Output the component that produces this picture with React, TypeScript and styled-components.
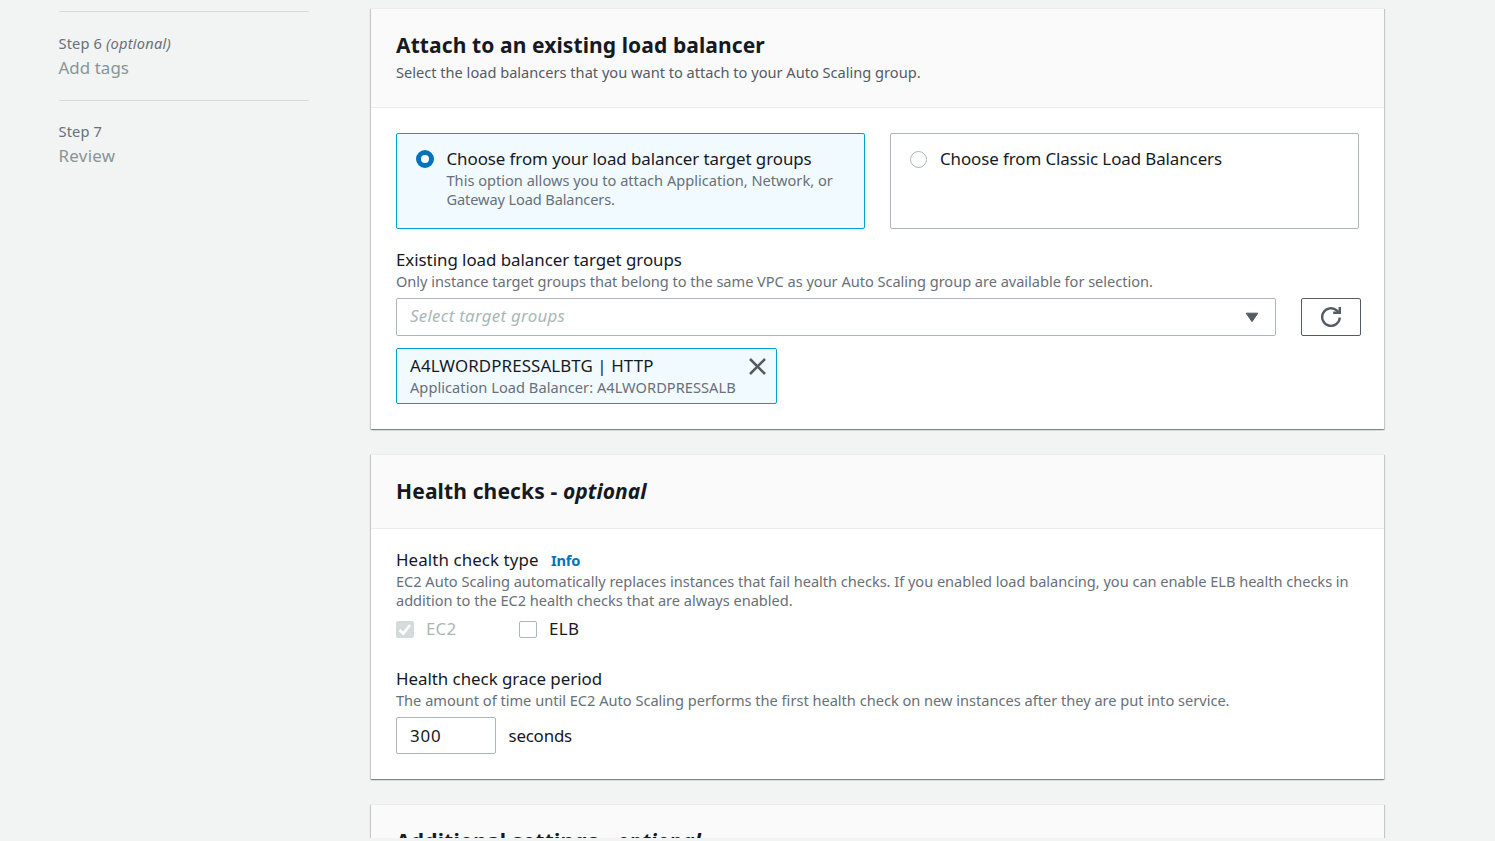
import React from 'react';
import styled, { createGlobalStyle, css } from 'styled-components';

const GlobalStyle = createGlobalStyle`
  *, *::before, *::after { box-sizing: border-box; }
  body {
    margin: 0;
    background: #f2f3f3;
    color: #16191f;
    font-family: 'Noto Sans', 'Open Sans', sans-serif;
    font-size: 16.9px;
    overflow: hidden;
  }
  h2, p { margin: 0; }
`;

type Tracking = { $track?: number };
const tracking = css<Tracking>`
  letter-spacing: ${(p) => p.$track ?? 0}px;
  white-space: nowrap;
`;

const Page = styled.div`
  display: flex;
  gap: 62px;
  height: 838px;
  padding-left: 58.5px;
  overflow: hidden;
`;

const Steps = styled.nav`
  width: 250.5px;
  padding-top: 11px;
`;

const Step = styled.div`
  height: 89px;
  padding-top: 22px;
  border-top: 1px solid #d5dbdb;
  & + & { padding-top: 21px; }
`;

const StepNumber = styled.div<Tracking>`
  ${tracking}
  height: 19px;
  line-height: 19px;
  font-size: 14.6px;
  color: #687078;
`;

const StepOptional = styled.em<Tracking>`
  ${tracking}
`;

const StepName = styled.div<Tracking>`
  ${tracking}
  margin-top: 4px;
  line-height: 22px;
  color: #879596;
`;

const Main = styled.main`
  width: 1013px;
  flex: none;
  display: flex;
  flex-direction: column;
  gap: 25px;
  padding-top: 8px;
`;

const Panel = styled.section`
  flex: none;
  background: #fff;
  border-top: 1px solid #eaeded;
  box-shadow: 0 1px 1px 0 rgba(0, 28, 36, 0.3), 1px 1px 1px 0 rgba(0, 28, 36, 0.15),
    -1px 1px 1px 0 rgba(0, 28, 36, 0.15);
`;

const PanelHeader = styled.header<{ $height: number }>`
  height: ${(p) => p.$height}px;
  padding: 21px 25px 0;
  background: #fafafa;
  border-bottom: 1px solid #eaeded;
`;

const Title = styled.h2<Tracking>`
  ${tracking}
  font-size: 21px;
  line-height: 30px;
  font-weight: 700;
`;

const TitleOptional = styled.em<Tracking>`
  ${tracking}
`;

const TitleNote = styled.p<Tracking>`
  ${tracking}
  margin-top: 3px;
  font-size: 14.6px;
  line-height: 19px;
  color: #545b64;
`;

const PanelBody = styled.div<{ $top: number }>`
  padding: ${(p) => p.$top}px 25px 25px;
`;

const Tiles = styled.div`
  display: grid;
  grid-template-columns: 1fr 1fr;
  gap: 25px;
  margin-bottom: 20px;
`;

const Tile = styled.label<{ $selected?: boolean }>`
  display: flex;
  height: 96px;
  padding: 14px 19px;
  border: 1px solid ${(p) => (p.$selected ? '#00a1c9' : '#aab7b8')};
  border-radius: 2px;
  background: ${(p) => (p.$selected ? '#f1faff' : '#fff')};
`;

const Radio = styled.span<{ $selected?: boolean }>`
  flex: none;
  width: ${(p) => (p.$selected ? 18 : 17)}px;
  height: ${(p) => (p.$selected ? 18 : 17)}px;
  margin: ${(p) => (p.$selected ? '2px 12.5px' : '2.5px 13px')} 0 0;
  border-radius: 50%;
  background: #fff;
  border: ${(p) => (p.$selected ? '5.5px solid #0073bb' : '1px solid #aab7b8')};
`;

const Label = styled.div<Tracking>`
  ${tracking}
  height: 22px;
  line-height: 22px;
`;

const Description = styled.p<Tracking>`
  ${tracking}
  height: 19px;
  font-size: 14.6px;
  line-height: 19px;
  color: #687078;
`;

const FieldNotes = styled.div`
  margin: 1px 0 7px;
`;

const TextStack = styled.div`
  display: flex;
  flex-direction: column;
  ${Label} { margin-bottom: 1px; }
`;

const SelectRow = styled.div`
  display: flex;
  gap: 25px;
`;

const Select = styled.div`
  flex: none;
  width: 880px;
  height: 38px;
  display: flex;
  align-items: center;
  justify-content: space-between;
  padding: 0 16px 3px 13px;
  border: 1px solid #aab7b8;
  border-radius: 2px;
`;

const Placeholder = styled.em<Tracking>`
  ${tracking}
  color: #aab7b8;
`;

const CaretIcon = styled.svg`
  margin-top: 2px;
`;

const RefreshButton = styled.button`
  flex: none;
  width: 60px;
  height: 38px;
  display: grid;
  place-items: center;
  padding: 0;
  background: #fff;
  border: 1px solid #545b64;
  border-radius: 2px;
`;

const Token = styled.div`
  display: flex;
  justify-content: space-between;
  width: 381px;
  height: 56px;
  margin-top: 12px;
  padding: 6px 10px 0 13px;
  border: 1px solid #00a1c9;
  border-radius: 2px;
  background: #f1faff;
`;

const TokenIcon = styled.svg`
  flex: none;
  margin-top: 3px;
`;

const LabelRow = styled.div`
  display: flex;
  height: 22px;
  gap: 12.5px;
`;

const InfoLink = styled.a<Tracking>`
  ${tracking}
  font-size: 14.6px;
  line-height: 22px;
  font-weight: 700;
  color: #0073bb;
`;

const Checks = styled.div`
  display: flex;
  margin: 8px 0 28px;
`;

const Check = styled.label<{ $disabled?: boolean }>`
  display: flex;
  gap: 12px;
  width: 123px;
  color: ${(p) => (p.$disabled ? '#aab7b8' : '#16191f')};
`;

const Box = styled.span<{ $disabled?: boolean }>`
  display: grid;
  place-items: center;
  width: 18px;
  height: 17px;
  margin-top: 3px;
  border: 1px solid ${(p) => (p.$disabled ? '#d5dbdb' : '#aab7b8')};
  border-radius: 2px;
  background: ${(p) => (p.$disabled ? '#d5dbdb' : '#fff')};
`;

const InputRow = styled.div`
  display: flex;
  align-items: center;
  gap: 12.5px;
`;

const NumberInput = styled.input`
  width: 100px;
  height: 37px;
  padding: 0 13px;
  border: 1px solid #aab7b8;
  border-radius: 2px;
  font: inherit;
  color: inherit;
  letter-spacing: 0.8px;
`;

export default function App() {
  return (
    <>
      <GlobalStyle />
      <Page>
        <Steps>
          <Step>
            <StepNumber $track={0.15}>
              Step 6 <StepOptional $track={0.25}>(optional)</StepOptional>
            </StepNumber>
            <StepName $track={0.06}>Add tags</StepName>
          </Step>
          <Step>
            <StepNumber $track={0.15}>Step 7</StepNumber>
            <StepName $track={0.3}>Review</StepName>
          </Step>
        </Steps>
        <Main>
          <Panel>
            <PanelHeader $height={99}>
              <Title $track={0.1}>Attach to an existing load balancer</Title>
              <TitleNote>
                Select the load balancers that you want to attach to your Auto Scaling group.
              </TitleNote>
            </PanelHeader>
            <PanelBody $top={25}>
              <Tiles>
                <Tile $selected>
                  <Radio $selected />
                  <TextStack>
                    <Label $track={-0.065}>Choose from your load balancer target groups</Label>
                    <Description>This option allows you to attach Application, Network, or</Description>
                    <Description $track={-0.12}>Gateway Load Balancers.</Description>
                  </TextStack>
                </Tile>
                <Tile>
                  <Radio />
                  <Label $track={-0.08}>Choose from Classic Load Balancers</Label>
                </Tile>
              </Tiles>
              <Label $track={-0.04}>Existing load balancer target groups</Label>
              <FieldNotes>
                <Description $track={-0.033}>
                  Only instance target groups that belong to the same VPC as your Auto Scaling group are
                  available for selection.
                </Description>
              </FieldNotes>
              <SelectRow>
                <Select>
                  <Placeholder $track={0.26}>Select target groups</Placeholder>
                  <CaretIcon width="14" height="12" viewBox="0 0 14 12">
                    <path d="M1.2 2.2h11.6L7 10.7z" fill="#545b64" stroke="#545b64" strokeLinejoin="round" />
                  </CaretIcon>
                </Select>
                <RefreshButton aria-label="Refresh">
                  <svg width="20" height="20" viewBox="0 0 20 20" fill="none" stroke="#545b64" strokeWidth="2.4">
                    <path d="M18.8 10.5A8.8 8.8 0 1 1 16 3.6L18 5.6" />
                    <path d="M12.2 5.8h6.6V0" />
                  </svg>
                </RefreshButton>
              </SelectRow>
              <Token>
                <TextStack>
                  <Label $track={0.1}>A4LWORDPRESSALBTG | HTTP</Label>
                  <Description $track={0.045}>Application Load Balancer: A4LWORDPRESSALB</Description>
                </TextStack>
                <TokenIcon width="17" height="17" viewBox="0 0 17 17" stroke="#545b64" strokeWidth="2.5">
                  <path d="M1 1l15 15M16 1L1 16" />
                </TokenIcon>
              </Token>
            </PanelBody>
          </Panel>

          <Panel>
            <PanelHeader $height={74}>
              <Title $track={0.14}>
                Health checks - <TitleOptional $track={0.02}>optional</TitleOptional>
              </Title>
            </PanelHeader>
            <PanelBody $top={20}>
              <LabelRow>
                <Label $track={0.09}>Health check type</Label>
                <InfoLink $track={-0.2}>Info</InfoLink>
              </LabelRow>
              <FieldNotes>
                <Description $track={-0.032}>
                  EC2 Auto Scaling automatically replaces instances that fail health checks. If you enabled
                  load balancing, you can enable ELB health checks in
                </Description>
                <Description $track={-0.025}>
                  addition to the EC2 health checks that are always enabled.
                </Description>
              </FieldNotes>
              <Checks>
                <Check $disabled>
                  <Box $disabled>
                    <svg width="14" height="13" viewBox="0 0 14 13" fill="none" stroke="#fff" strokeWidth="2.6">
                      <path d="M1.5 7l3.8 3.6L12 2" />
                    </svg>
                  </Box>
                  <Label $track={0.2}>EC2</Label>
                </Check>
                <Check>
                  <Box />
                  <Label $track={0.4}>ELB</Label>
                </Check>
              </Checks>
              <Label $track={-0.03}>Health check grace period</Label>
              <FieldNotes>
                <Description $track={-0.007}>
                  The amount of time until EC2 Auto Scaling performs the first health check on new instances
                  after they are put into service.
                </Description>
              </FieldNotes>
              <InputRow>
                <NumberInput defaultValue="300" />
                <Label $track={-0.2}>seconds</Label>
              </InputRow>
            </PanelBody>
          </Panel>

          <Panel>
            <PanelHeader $height={74}>
              <Title $track={0.19}>
                Additional settings - <TitleOptional $track={0.09}>optional</TitleOptional>
              </Title>
            </PanelHeader>
          </Panel>
        </Main>
      </Page>
    </>
  );
}
